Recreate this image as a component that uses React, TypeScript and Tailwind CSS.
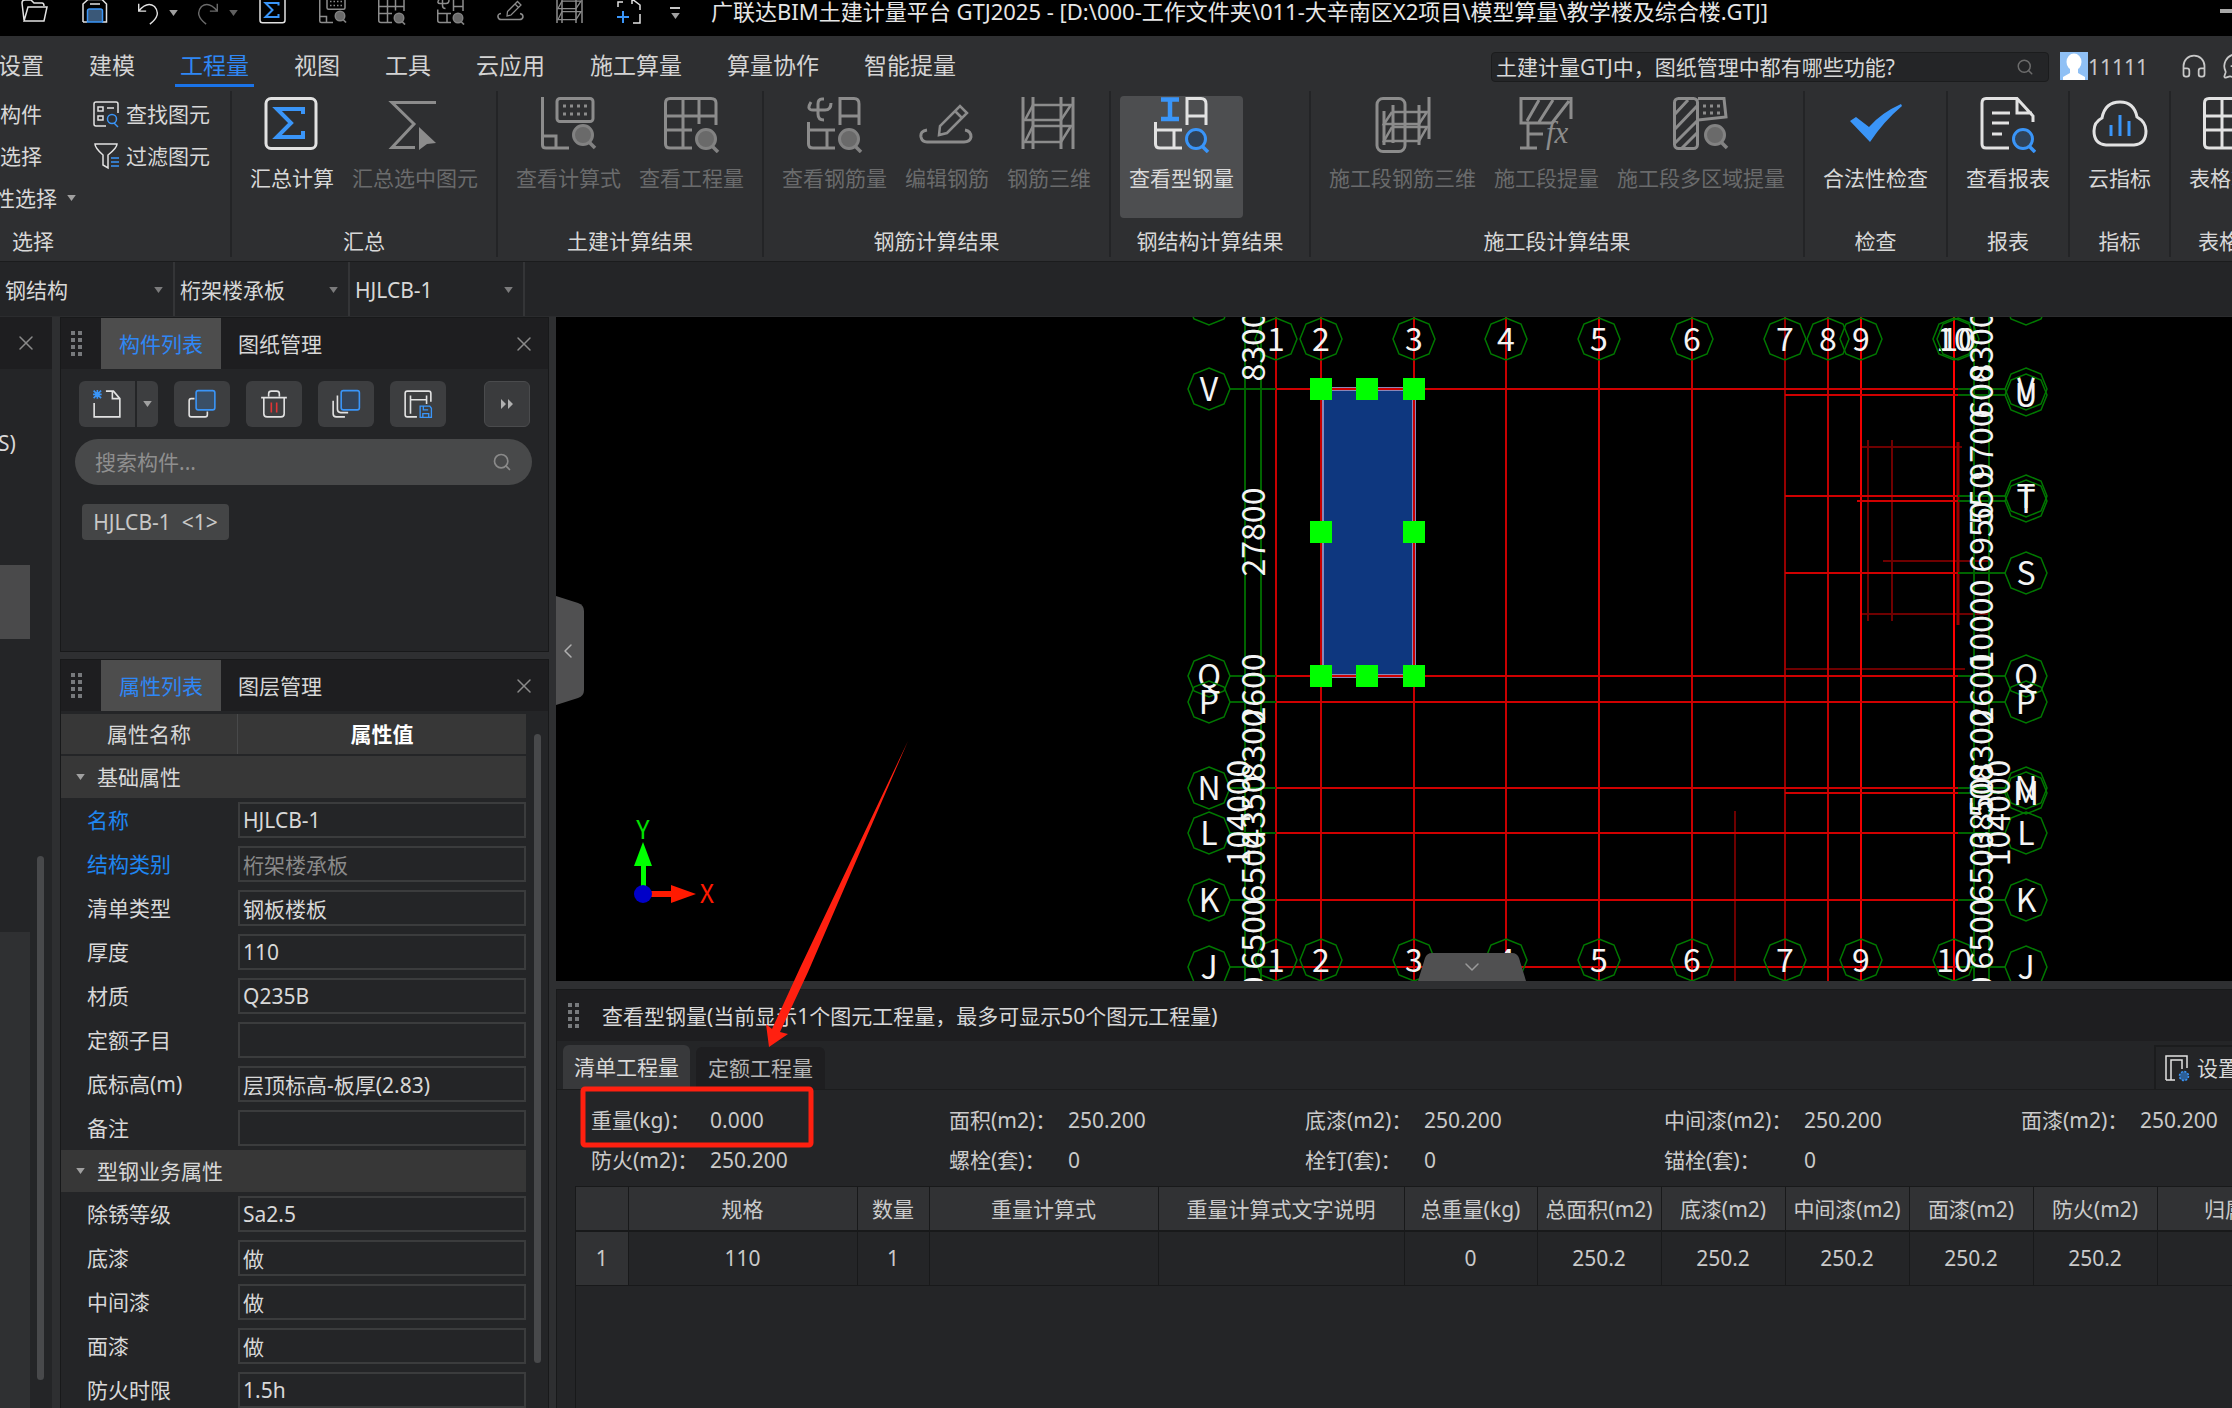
import type { ReactNode } from "react"
import clsx from "clsx"
import { ChevronDown, ChevronLeft, Headphones, MessageCircleMore, Search, X } from "lucide-react"

const LIGHT = "#e2e2e2"
const GREY = "#8c8c8c"
const BLUE = "#3a95f8"

/* ---------- icons ---------- */

interface IconProps {
  size?: number
  color?: string
}

function Svg({ size = 56, color = LIGHT, children }: IconProps & { children: ReactNode }) {
  return (
    <svg width={size} height={size} viewBox="0 0 56 56" fill="none" stroke={color} strokeWidth={3} className="shrink-0">
      {children}
    </svg>
  )
}

function Lens({ x, y, active = false }: { x: number; y: number; active?: boolean }) {
  return (
    <g stroke={active ? BLUE : "#828282"}>
      <circle cx={x} cy={y} r={9.5} fill={active ? "#2f4258" : "#6a6a6a"} />
      <path d={`M${x + 6} ${y + 7} l6 6`} strokeWidth={3.5} />
    </g>
  )
}

const SumIcon = (p: IconProps) => (
  <Svg {...p}>
    <rect x="2" y="1.5" width="50" height="50" rx="5" />
    <path d="M39 17 V12 H13 L27 26 L13 40 H39 V34" stroke={BLUE} strokeWidth={4} />
  </Svg>
)

const SumPickIcon = (p: IconProps) => (
  <Svg {...p}>
    <path d="M49 5.5 H5 L27 27 L5 50.5 H28" />
    <path d="M32 30 L49 46 L40 47 L32 53 Z" fill={GREY} stroke="none" />
  </Svg>
)

const FormulaIcon = (p: IconProps) => (
  <Svg {...p}>
    <path d="M1.5 0 V48 Q1.5 51 5 51 H28 M1.5 39 H15 V51" />
    <rect x="16" y="1.5" width="36" height="23" rx="3" />
    <path d="M22 9 H47 M22 17 H47" strokeDasharray="3 4" />
    <Lens x={42} y={38} />
  </Svg>
)

const GridIcon = (p: IconProps) => (
  <Svg {...p}>
    <path d="M52 28 V6 Q52 1.5 47 1.5 H6 Q1.5 1.5 1.5 6 V47 Q1.5 51 6 51 H28 M19 2 V51 M35 2 V27 M2 19 H52 M2 33 H28" />
    <Lens x={42} y={42} />
  </Svg>
)

const SectionBase = () => (
  <path d="M33 28 V1.5 H47 Q52 1.5 52 7 V28 M33 19 H52 M1.5 25 V47 Q1.5 51 6 51 H28 M1.5 33 H28 M20 33 V51" />
)

const RebarIcon = (p: IconProps) => (
  <Svg {...p}>
    <path d="M17 2 H15 Q11 2 11 7 V17 Q11 23 17 23 M4 5 Q-1 13 6 13 H18 Q24 13 24 6" />
    <SectionBase />
    <Lens x={42} y={42} />
  </Svg>
)

const SteelIcon = (p: IconProps) => (
  <Svg {...p}>
    <path d="M7 2.5 H25 M16 2 V22 M7 22 H25" stroke={BLUE} strokeWidth={4.5} />
    <SectionBase />
    <Lens x={42} y={42} active />
  </Svg>
)

const EditRebarIcon = (p: IconProps) => (
  <Svg {...p}>
    <path d="M8 33 Q1 34 2 40 Q3 45 8 45 H45 Q51 45 52 40 Q52 34 46 33" />
    <path d="M20 38 L21 29 L41 9 L48 16 L28 36 Z M36 14 L43 21" strokeWidth={2.5} />
  </Svg>
)

const Rebar3dIcon = (p: IconProps) => (
  <Svg {...p}>
    <path d="M2 0 V52 M12 0 V52 M40 0 V52 M52 0 V52" />
    <path d="M12 8 H50 L40 23 H4 L12 8 M12 29 H50 L40 45 H4 L12 29" strokeWidth={2.5} />
  </Svg>
)

const StageRebarIcon = (p: IconProps) => (
  <Svg {...p}>
    <rect x="2" y="1.5" width="28" height="53" rx="6" />
    <path d="M9 14 V48 M18 8 V46 M44 8 V48 M54 0 V42" />
    <path d="M17 15 H52 L44 27 H9 L17 15 M17 30 H52 L44 44 H9 L17 30" strokeWidth={2.5} />
  </Svg>
)

const StageFxIcon = (p: IconProps) => (
  <Svg {...p}>
    <path d="M52 22 V1.5 H2 V26 H33 L50 4 M9 26 V51 M1 51 H18 M9 37 H24 M8 24 L20 3 M20 25 L34 3" />
    <text x="27" y="46" fontSize="31" fontStyle="italic" fontFamily="Liberation Serif" fill={GREY} stroke="none">
      fx
    </text>
  </Svg>
)

const StageAreaIcon = (p: IconProps) => (
  <Svg {...p}>
    <rect x="1.5" y="1.5" width="23" height="50" rx="4" />
    <path d="M2 17 L15 3 M2 32 L24 9 M2 46 L24 24 M9 51 L24 36" />
    <path d="M25 1.5 H51 L53 20 L25 23" />
    <path d="M30 9 H48 M30 16 H48" strokeDasharray="3 4" />
    <Lens x={42} y={38} />
  </Svg>
)

const CheckIcon = (p: IconProps) => (
  <Svg {...p}>
    <path d="M2 24 L8 20 L21 30 Q33 16 53 7 L54 9 Q36 24 22 45 Z" fill={BLUE} stroke="none" />
  </Svg>
)

const ReportIcon = (p: IconProps) => (
  <Svg {...p}>
    <path d="M29 51 H6 Q2 51 2 47 V6 Q2 1.5 6 1.5 H37 L53 19 V25 M37 2 V16 H52 M12 16 H30 M12 26 H29 M12 37 H22" />
    <Lens x={43} y={42} active />
  </Svg>
)

const CloudIcon = (p: IconProps) => (
  <Svg {...p}>
    <path d="M14 48 Q2 47 2 34 Q2 25 10 21 Q13 5 28 5 Q42 5 45 20 Q54 25 54 34 Q54 47 42 48 Z" />
    <path d="M19 28 V39 M28 18 V39 M37 24 V39" stroke={BLUE} />
  </Svg>
)

const SheetIcon = (p: IconProps) => (
  <Svg {...p}>
    <path d="M54 1.5 H6 Q1.5 1.5 1.5 6 V47 Q1.5 51 6 51 H54 M19 2 V51 M37 2 V51 M2 19 H54 M2 33 H54" />
  </Svg>
)

const FolderIcon = () => (
  <Svg size={28}>
    <path d="M8 46 L4 12 Q4 6 10 6 H22 L28 12 H44 Q48 12 48 18 M8 48 L16 20 H54 L48 48 Z" />
  </Svg>
)

const SaveIcon = () => (
  <Svg size={28}>
    <path d="M4 50 V14 L14 5 H42 L51 14 V50 H42 M4 50 H12 M18 14 H38" />
    <path d="M13 50 V28 Q13 24 17 24 H39 Q43 24 43 28 V50 Z" stroke={BLUE} fill="#3a5878" />
  </Svg>
)

const UndoIcon = ({ color = LIGHT }: IconProps) => (
  <Svg size={26} color={color}>
    <path d="M8 8 V24 H24 M8 24 Q26 2 42 14 Q58 32 32 52" />
  </Svg>
)

const RedoIcon = () => (
  <Svg size={26} color="#6a6a6a">
    <path d="M48 8 V24 H32 M48 24 Q30 2 14 14 Q-2 32 24 52" />
  </Svg>
)

const AddFrameIcon = () => (
  <Svg size={28}>
    <path d="M6 20 V10 H16 M26 4 H34 L50 16 V26 M50 34 V52 H36 M34 4 V14" />
    <path d="M4 40 H28 M16 28 V52" stroke={BLUE} strokeWidth={4} />
  </Svg>
)

const FindIcon = () => (
  <Svg size={28}>
    <path d="M52 26 V8 Q52 4 48 4 H8 Q4 4 4 8 V48 Q4 52 8 52 H28" />
    <path d="M12 14 H22 V22 H12 Z M30 16 H44 M12 32 H22 V40 H12 Z" />
    <g stroke={BLUE}>
      <circle cx="40" cy="38" r="9" />
      <path d="M44 46 L52 54" />
    </g>
  </Svg>
)

const FilterIcon = () => (
  <Svg size={28}>
    <path d="M6 4 H50 Q50 12 32 26 V52 L22 46 V26 Q6 12 6 4 Z" />
    <path d="M38 32 H54 M38 40 H54 M38 48 H54" stroke={BLUE} />
  </Svg>
)

const NewIcon = () => (
  <Svg size={30}>
    <path d="M4 26 V52 H52 V18 L40 4 H26 M38 4 V18 H52" />
    <path d="M3 3 L17 17 M17 3 L3 17 M10 2 V18 M2 10 H18" stroke={BLUE} />
  </Svg>
)

const CopyIcon = () => (
  <Svg size={30}>
    <path d="M14 18 H8 Q4 18 4 22 V48 Q4 52 8 52 H34 Q38 52 38 48 V42" />
    <rect x="17" y="3" width="35" height="36" rx="4" stroke={BLUE} fill="#3a4f66" />
  </Svg>
)

const TrashIcon = () => (
  <Svg size={30}>
    <path d="M4 16 H52 M18 14 V9 Q18 4 23 4 H33 Q38 4 38 9 V14 M9 16 V46 Q9 52 15 52 H41 Q47 52 47 46 V16" />
    <path d="M23 25 V44 M33 25 V44" stroke="#e03535" />
  </Svg>
)

const LayersIcon = () => (
  <Svg size={30}>
    <path d="M12 12 V38 Q12 44 18 44 H32 M4 22 V46 Q4 52 10 52 H26" />
    <rect x="19" y="3" width="34" height="36" rx="4" stroke={BLUE} fill="#344459" />
  </Svg>
)

const StoreIcon = () => (
  <Svg size={30}>
    <path d="M52 24 V8 Q52 4 48 4 H8 Q4 4 4 8 V48 Q4 52 8 52 H26 M14 12 V46 M14 20 H44 M44 12 V28" />
    <path d="M32 32 H50 L53 36 V53 H32 Z M38 33 V39 H47 M37 53 V46 H48 V53" stroke={BLUE} strokeWidth={2.5} />
  </Svg>
)

const SettingIcon = () => (
  <Svg size={28}>
    <path d="M4 52 V4 H46 V28 M14 52 V12 H36 V30 M4 52 H22" />
    <circle cx="40" cy="44" r="9" fill="#2c5f97" stroke={BLUE} strokeDasharray="4 3" />
  </Svg>
)

function Caret({ className }: { className?: string }) {
  return (
    <svg width="9" height="6" viewBox="0 0 10 7" className={clsx("shrink-0", className)}>
      <path d="M0 0 H10 L5 7 Z" fill="#a0a0a0" />
    </svg>
  )
}

function Grip() {
  return (
    <svg width="12" height="26" viewBox="0 0 12 26" className="shrink-0">
      {[0, 7, 14, 21].map((y) => (
        <g key={y} fill="#77797c">
          <rect x="0" y={y} width="4" height="4" />
          <rect x="7" y={y} width="4" height="4" />
        </g>
      ))}
    </svg>
  )
}

/* ---------- top bars ---------- */

function TitleBar() {
  return (
    <header className="flex h-9 shrink-0 items-center overflow-hidden bg-black pb-3.5 pl-5">
      <div className="flex w-[691px] shrink-0 items-center">
        <button className="w-[61px]" aria-label="打开"><FolderIcon /></button>
        <button className="w-[54px]" aria-label="保存"><SaveIcon /></button>
        <button className="flex w-[60px] items-center gap-2 pt-1" aria-label="撤销"><UndoIcon /><Caret /></button>
        <button className="flex w-[64px] items-center gap-2 pt-1" aria-label="恢复"><RedoIcon /><Caret className="opacity-60" /></button>
        <button className="w-[60px]" aria-label="汇总计算"><SumIcon size={28} /></button>
        <button className="w-[59px]" aria-label="查看计算式"><FormulaIcon size={28} color={GREY} /></button>
        <button className="w-[59px]" aria-label="查看工程量"><GridIcon size={28} color={GREY} /></button>
        <button className="w-[60px]" aria-label="查看钢筋量"><RebarIcon size={28} color={GREY} /></button>
        <button className="w-[59px]" aria-label="编辑钢筋"><EditRebarIcon size={28} color={GREY} /></button>
        <button className="w-[59px]" aria-label="钢筋三维"><Rebar3dIcon size={28} color={GREY} /></button>
        <button className="w-[55px]" aria-label="添加"><AddFrameIcon /></button>
        <button className="flex flex-col items-center gap-1 pt-1" aria-label="更多">
          <span className="h-0.5 w-2.5 bg-[#c8c8c8]" />
          <Caret />
        </button>
      </div>
      <h1 className="flex-1 text-[22px] whitespace-nowrap text-[#e6e6e6]">
        广联达BIM土建计量平台 GTJ2025 - [D:\000-工作文件夹\011-大辛南区X2项目\模型算量\教学楼及综合楼.GTJ]
      </h1>
      <button className="h-1 w-3 bg-[#a8a8a8]" aria-label="最小化" />
    </header>
  )
}

const menus = ["设置", "建模", "工程量", "视图", "工具", "云应用", "施工算量", "算量协作", "智能提量"]

function MenuBar() {
  return (
    <nav className="flex h-[51px] shrink-0 items-center overflow-hidden bg-[#2e2f31]">
      <div className="-ml-[7px] flex h-full shrink-0 gap-[35px]">
        {menus.map((m) => (
          <button
            key={m}
            className={clsx(
              "border-b-3 px-[5px] pt-2.5 text-[23px] whitespace-nowrap",
              m === "工程量" ? "border-[#1a73e8] text-[#2f87f5]" : "border-transparent text-[#d4d4d4]"
            )}
          >
            {m}
          </button>
        ))}
      </div>
      <div className="flex-1" />
      <label className="mt-2.5 flex h-[30px] w-[558px] shrink-0 items-center rounded border border-[#1b1c1d] bg-[#242527] px-1">
        <input
          className="min-w-0 flex-1 bg-transparent text-[#d8d8d8] outline-none"
          aria-label="搜索帮助"
          defaultValue="土建计量GTJ中，图纸管理中都有哪些功能?"
        />
        <Search className="mr-2.5 size-[18px] text-[#6c6c6c]" />
      </label>
      <svg width="28" height="28" viewBox="0 0 28 28" className="mt-2 ml-[11px] shrink-0">
        <rect width="28" height="28" fill="#8fc0f5" />
        <ellipse cx="14" cy="10" rx="7.5" ry="8.5" fill="#fff" />
        <path d="M10 15 H18 V21 L25 25 V28 H3 V25 L10 21 Z" fill="#fff" />
      </svg>
      <span className="mt-2.5 w-[92px] shrink-0 text-[#c8c8c8]">11111</span>
      <Headphones className="mt-2 size-7 shrink-0 text-[#c8c8c8]" strokeWidth={1.5} />
      <MessageCircleMore className="mt-2 -mr-[18px] ml-3.5 size-7 shrink-0 text-[#c8c8c8]" strokeWidth={1.5} />
    </nav>
  )
}

interface Tool {
  label: string
  icon: (p: IconProps) => ReactNode
  on?: boolean
  active?: boolean
}

const groups: { title: string; tools: Tool[]; wide?: boolean; left?: boolean }[] = [
  { title: "汇总", tools: [{ label: "汇总计算", icon: SumIcon, on: true }, { label: "汇总选中图元", icon: SumPickIcon }] },
  { title: "土建计算结果", tools: [{ label: "查看计算式", icon: FormulaIcon }, { label: "查看工程量", icon: GridIcon }] },
  {
    title: "钢筋计算结果",
    tools: [
      { label: "查看钢筋量", icon: RebarIcon },
      { label: "编辑钢筋", icon: EditRebarIcon },
      { label: "钢筋三维", icon: Rebar3dIcon },
    ],
  },
  { title: "钢结构计算结果", wide: true, tools: [{ label: "查看型钢量", icon: SteelIcon, on: true, active: true }] },
  {
    title: "施工段计算结果",
    tools: [
      { label: "施工段钢筋三维", icon: StageRebarIcon },
      { label: "施工段提量", icon: StageFxIcon },
      { label: "施工段多区域提量", icon: StageAreaIcon },
    ],
  },
  { title: "检查", tools: [{ label: "合法性检查", icon: CheckIcon, on: true }] },
  { title: "报表", tools: [{ label: "查看报表", icon: ReportIcon, on: true }] },
  { title: "指标", tools: [{ label: "云指标", icon: CloudIcon, on: true }] },
  { title: "表格", left: true, tools: [{ label: "表格算量", icon: SheetIcon, on: true }] },
]

function Ribbon() {
  return (
    <div className="flex h-[175px] shrink-0 overflow-hidden border-b border-[#1b1c1d] bg-[#2e2f31] py-1">
      <section className="flex w-[232px] shrink-0 flex-col border-r-2 border-[#232426]">
        <div className="flex flex-1 gap-9">
          <div className="flex w-14 shrink-0 flex-col pt-0.5">
            <button className="h-[42px] text-left">构件</button>
            <button className="h-[42px] text-left">选择</button>
            <button className="-ml-1.5 flex h-[42px] w-20 items-center gap-2.5 whitespace-nowrap">性选择<Caret /></button>
          </div>
          <div className="flex flex-col pt-0.5">
            <button className="flex h-[42px] items-center gap-1.5"><FindIcon />查找图元</button>
            <button className="flex h-[42px] items-center gap-1.5"><FilterIcon />过滤图元</button>
          </div>
        </div>
        <h2 className="h-[30px] pl-3">选择</h2>
      </section>
      {groups.map((g) => (
        <section
          key={g.title}
          className={clsx("flex shrink-0 flex-col border-r-2 border-[#232426] px-[9px] whitespace-nowrap", g.wide && "w-[200px]")}
        >
          <div className="flex flex-1 pt-[5px]">
            {g.tools.map(({ label, icon: Icon, on, active }) => (
              <button
                key={label}
                disabled={!on}
                className={clsx(
                  "flex h-[122px] flex-col items-center gap-[11px] rounded px-[9px] pt-px",
                  on ? "text-[#d8d8d8]" : "text-[#6a6b6c]",
                  active && "bg-[#4d4e50]"
                )}
              >
                <Icon color={on ? LIGHT : GREY} />
                {label}
              </button>
            ))}
          </div>
          <h2 className={clsx("h-[30px]", g.left ? "pl-[18px]" : "text-center")}>{g.title}</h2>
        </section>
      ))}
    </div>
  )
}

function SelectBar() {
  return (
    <div className="flex h-[55px] shrink-0 border-b border-[#2b2c2e] bg-[#242527]">
      {["钢结构", "桁架楼承板", "HJLCB-1"].map((v) => (
        <div key={v} className="flex w-[175px] items-center border-r-2 border-[#343537] pt-0.5 pr-2.5">
          <select aria-label={v} className="h-full flex-1 appearance-none bg-transparent pl-[5px] text-[#d8d8d8] outline-none">
            <option>{v}</option>
          </select>
          <Caret className="opacity-70" />
        </div>
      ))}
    </div>
  )
}

/* ---------- side panels ---------- */

function PanelTabs({ active, other }: { active: string; other: string }) {
  return (
    <div className="flex h-[51px] shrink-0 items-center bg-[#1e1e20] pr-3 pl-2.5">
      <Grip />
      <button className="ml-[18px] h-full w-[120px] bg-[#4d4d4d] text-[#2f87f5]">{active}</button>
      <button className="ml-[17px] text-[#d8d8d8]">{other}</button>
      <button className="ml-auto text-[#8a8a8a]" aria-label="关闭"><X className="size-6" strokeWidth={1.5} /></button>
    </div>
  )
}

function ComponentPanel() {
  const btn = "flex h-[46px] w-14 items-center justify-center rounded-md bg-[#3d3e40]"
  return (
    <section className="flex h-[335px] shrink-0 flex-col border border-[#18191a] bg-[#242527]">
      <PanelTabs active="构件列表" other="图纸管理" />
      <div className="mt-3 flex gap-4 px-[18px]">
        <div className="flex gap-0.5">
          <button className="flex h-[46px] w-14 items-center justify-center rounded-l-md bg-[#3d3e40]" aria-label="新建"><NewIcon /></button>
          <button className="flex h-[46px] w-[21px] items-center justify-center rounded-r-md bg-[#3d3e40]" aria-label="新建选项"><Caret /></button>
        </div>
        <button className={btn} aria-label="复制"><CopyIcon /></button>
        <button className={btn} aria-label="删除"><TrashIcon /></button>
        <button className={btn} aria-label="层间复制"><LayersIcon /></button>
        <button className={btn} aria-label="存档"><StoreIcon /></button>
        <button className="ml-auto flex h-[46px] w-[46px] items-center justify-center rounded-md border border-[#4a4b4d] bg-[#3a3b3d]" aria-label="更多">
          <svg width="12" height="10" viewBox="0 0 12 10" fill="#b0b0b0"><path d="M0 0 L5 5 L0 10 Z M7 0 L12 5 L7 10 Z" /></svg>
        </button>
      </div>
      <label className="mt-3 mr-4 ml-3.5 flex h-[46px] items-center rounded-full bg-[#48494a] px-5">
        <input className="min-w-0 flex-1 bg-transparent outline-none placeholder:text-[#8f8f8f]" placeholder="搜索构件..." aria-label="搜索构件" />
        <Search className="size-5 text-[#8a8a8a]" />
      </label>
      <button className="mt-[19px] ml-[21px] h-9 w-[147px] rounded bg-[#444546] text-center whitespace-pre text-[#c8c8c8]">{"HJLCB-1  <1>"}</button>
    </section>
  )
}

interface Prop {
  name: string
  value: string
  kind?: "key" | "locked"
}

const baseProps: Prop[] = [
  { name: "名称", value: "HJLCB-1", kind: "key" },
  { name: "结构类别", value: "桁架楼承板", kind: "locked" },
  { name: "清单类型", value: "钢板楼板" },
  { name: "厚度", value: "110" },
  { name: "材质", value: "Q235B" },
  { name: "定额子目", value: "" },
  { name: "底标高(m)", value: "层顶标高-板厚(2.83)" },
  { name: "备注", value: "" },
]

const steelProps: Prop[] = [
  { name: "除锈等级", value: "Sa2.5" },
  { name: "底漆", value: "做" },
  { name: "中间漆", value: "做" },
  { name: "面漆", value: "做" },
  { name: "防火时限", value: "1.5h" },
]

function PropGroup({ title, rows }: { title: string; rows: Prop[] }) {
  return (
    <div>
      <button className="flex h-[42px] w-full items-center gap-3 bg-[#373737] pl-[15px]"><Caret />{title}</button>
      {rows.map((r) => (
        <label key={r.name} className="flex h-11 items-center">
          <span className={clsx("w-[177px] shrink-0 pl-[26px]", r.kind && "text-[#1f86f0]")}>{r.name}</span>
          <input
            defaultValue={r.value}
            className={clsx(
              "h-9 min-w-0 flex-1 border-2 border-[#3b3c3d] bg-transparent px-[3px] outline-none",
              r.kind === "locked" ? "text-[#8a8a8a]" : "text-[#d8d8d8]"
            )}
          />
        </label>
      ))}
    </div>
  )
}

function PropertyPanel() {
  return (
    <section className="flex min-h-0 flex-1 flex-col border border-b-0 border-[#18191a] bg-[#242527]">
      <PanelTabs active="属性列表" other="图层管理" />
      <div className="mt-[3px] flex min-h-0 flex-1">
        <div className="w-[465px] shrink-0 overflow-hidden">
          <div className="mb-0.5 flex h-10 items-center bg-[#373737] text-center">
            <span className="w-[177px] border-r border-[#48494a] leading-10">属性名称</span>
            <span className="flex-1 font-bold text-white">属性值</span>
          </div>
          <PropGroup title="基础属性" rows={baseProps} />
          <PropGroup title="型钢业务属性" rows={steelProps} />
        </div>
        <div className="mt-5 ml-2 h-[629px] w-[7px] rounded-full bg-[#48494b]" />
      </div>
    </section>
  )
}

function NavStrip() {
  return (
    <aside className="flex w-[52px] shrink-0 flex-col bg-[#242527]">
      <div className="flex h-[52px] shrink-0 items-center justify-end bg-[#1e1e20] pr-3.5 text-[#8a8a8a]">
        <button aria-label="关闭"><X className="size-6" strokeWidth={1.5} /></button>
      </div>
      <div className="flex flex-1">
        <div className="flex w-[30px] flex-col">
          <div className="-ml-0.5 h-[196px] pt-[60px]">S)</div>
          <div className="h-[74px] bg-[#4a4a4b]" />
          <div className="mt-[293px] flex-1 bg-[#2f3032]" />
        </div>
        <div className="mt-[487px] ml-[7px] h-[524px] w-[7px] rounded-full bg-[#48494b]" />
      </div>
    </aside>
  )
}

/* ---------- drawing canvas ---------- */

const TOP = 317
const BOTTOM = 983

const columns = [
  { x: 1276, name: "1", color: "#c80000" },
  { x: 1321, name: "2", color: "#c80000" },
  { x: 1414, name: "3", color: "#c80000" },
  { x: 1506, name: "4", color: "#c80000" },
  { x: 1599, name: "5", color: "#d80000" },
  { x: 1692, name: "6", color: "#c80000" },
  { x: 1785, name: "7", color: "#960000" },
  { x: 1828, name: "8", color: "#c00000" },
  { x: 1861, name: "9", color: "#f00000" },
  { x: 1954, name: "10", color: "#ff0000" },
]

const rows = [
  { y: 389, name: "V", from: 1276 },
  { y: 395, name: "U", from: 1785 },
  { y: 496, name: "T", from: 1785 },
  { y: 501, name: "T", from: 1857 },
  { y: 573, name: "S", from: 1785 },
  { y: 676, name: "Q", from: 1276 },
  { y: 702, name: "P", from: 1276 },
  { y: 788, name: "N", from: 1276 },
  { y: 793, name: "M", from: 1785 },
  { y: 833, name: "L", from: 1276 },
  { y: 900, name: "K", from: 1276 },
  { y: 967, name: "J", from: 1276 },
]

const leftDims: [string, number][] = [
  ["8300", 346], ["27800", 532], ["2600", 689], ["8300", 745], ["4350", 811], ["6500", 867], ["6500", 934], ["6500", 1012],
]

const rightDims: [string, number][] = [
  ["8300", 346], ["600", 392], ["9700", 445], ["550", 498], ["6950", 537], ["10000", 624], ["2600", 689],
  ["8300", 745], ["500", 791], ["3850", 813], ["6500", 867], ["6500", 934], ["6500", 1012],
]

const handles = [
  [1321, 389], [1367, 389], [1414, 389],
  [1321, 532], [1414, 532],
  [1321, 676], [1367, 676], [1414, 676],
]

function Bubble({ x, y, name = "" }: { x: number; y: number; name?: string }) {
  return (
    <g>
      <path
        d={`M${x} ${y - 21} l15 6 l6 15 l-6 15 l-15 6 l-15 -6 l-6 -15 l6 -15 Z`}
        fill="none"
        stroke="#007800"
        strokeWidth={1.5}
      />
      <text x={x} y={y + 12} textAnchor="middle">{name}</text>
    </g>
  )
}

function Dim({ x, y, value }: { x: number; y: number; value: string }) {
  return <text x={x} y={y} textAnchor="middle" transform={`rotate(-90 ${x} ${y})`} dy={12}>{value}</text>
}

function Drawing() {
  return (
    <svg
      className="absolute inset-0 h-full w-full"
      viewBox="556 317 1676 664"
      preserveAspectRatio="xMidYMin slice"
      fill="#f4f4f4"
      fontSize="32"
      fontFamily="Noto Sans CJK SC, sans-serif"
    >
      {/* selected slab */}
      <rect x="1322" y="389" width="92" height="287" fill="#0e377f" stroke="#8a86b8" strokeWidth="4" />

      {/* secondary axes */}
      <g stroke="#6e0000" strokeWidth="2">
        <path d="M1861 447 H1962 M1883 561 H1990 M1861 614 H1990 M1785 669 H1965" />
        <path d="M1868 440 V621 M1892 440 V621 M1735 811 V983" />
        <path d="M1958 442 V625" stroke="#960000" strokeWidth="3" />
      </g>

      {columns.map((c) => (
        <path key={c.name} d={`M${c.x} ${TOP} V${BOTTOM}`} stroke={c.color} strokeWidth="2" />
      ))}
      {rows.map((r) => (
        <g key={r.y} strokeWidth="2">
          <path d={`M${r.from} ${r.y} H1958`} stroke="#d00000" />
          <path d={`M1958 ${r.y} H2005`} stroke="#006400" />
          {r.from === 1276 && <path d={`M1230 ${r.y} H1276`} stroke="#006400" />}
        </g>
      ))}
      <path d="M1245 317 V983 M1261 317 V983 M1974 317 V983 M1989 317 V983" stroke="#006400" strokeWidth="2" />

      <Bubble x={1209} y={304} />
      <Bubble x={2026} y={304} />
      {columns.map((c) => <Bubble key={c.name} x={c.x} y={339} name={c.name} />)}
      <Bubble x={1958} y={339} name="10" />
      {columns.filter((c) => c.name !== "8").map((c) => <Bubble key={c.name} x={c.x} y={960} name={c.name} />)}
      {rows.filter((r) => r.from === 1276).map((r) => <Bubble key={r.y} x={1209} y={r.y} name={r.name} />)}
      {rows.map((r) => <Bubble key={r.y} x={2026} y={r.y} name={r.name} />)}

      {leftDims.map(([v, y]) => <Dim key={y} x={1253} y={y} value={v} />)}
      {rightDims.map(([v, y]) => <Dim key={y} x={1981} y={y} value={v} />)}
      <Dim x={1238} y={813} value="104000" />
      <Dim x={1998} y={813} value="104000" />

      {handles.map(([x, y]) => (
        <rect key={`${x}-${y}`} x={x - 11} y={y - 11} width="22" height="22" fill="#00ff00" />
      ))}

      {/* coordinate gizmo */}
      <path d="M641 894 V866 H634 L643 842 L652 866 H646 V894 Z" fill="#00ff00" />
      <path d="M644 891 H671 V885 L696 894 L671 903 V897 H644 Z" fill="#ff1a00" />
      <circle cx="643" cy="894" r="9" fill="#0000c8" />
      <text x="643" y="839" textAnchor="middle" fontSize="25" fill="#00e000">Y</text>
      <text x="707" y="903" textAnchor="middle" fontSize="25" fill="#ff1a00">X</text>
    </svg>
  )
}

function Canvas() {
  return (
    <div className="relative min-h-0 flex-1 overflow-hidden bg-black">
      <Drawing />
      <button className="absolute top-[279px] left-0 h-[109px] w-7" aria-label="收起左侧">
        <svg viewBox="0 0 28 109" className="absolute inset-0 h-full w-full">
          <path d="M0 0 L22 7 Q28 9 28 15 V94 Q28 100 22 102 L0 109 Z" fill="#505051" />
        </svg>
        <ChevronLeft className="relative size-6 text-[#b0b0b0]" strokeWidth={1.5} />
      </button>
      <button className="absolute bottom-0 left-[862px] h-7 w-[108px]" aria-label="收起下方">
        <svg viewBox="0 0 108 28" className="absolute inset-0 h-full w-full">
          <path d="M0 28 L7 5 Q9 0 14 0 H94 Q99 0 101 5 L108 28 Z" fill="#505051" />
        </svg>
        <ChevronDown className="relative mx-auto size-6 text-[#9a9a9a]" strokeWidth={1.5} />
      </button>
    </div>
  )
}

/* ---------- quantity panel ---------- */

const stats = [
  ["重量(kg)：", "0.000"], ["面积(m2)：", "250.200"], ["底漆(m2)：", "250.200"], ["中间漆(m2)：", "250.200"], ["面漆(m2)：", "250.200"],
  ["防火(m2)：", "250.200"], ["螺栓(套)：", "0"], ["栓钉(套)：", "0"], ["锚栓(套)：", "0"],
]

const tableCols: [string, string, string][] = [
  ["规格", "110", "w-[229px]"],
  ["数量", "1", "w-[72px]"],
  ["重量计算式", "", "w-[229px]"],
  ["重量计算式文字说明", "", "w-[246px]"],
  ["总重量(kg)", "0", "w-[133px]"],
  ["总面积(m2)", "250.2", "w-[124px]"],
  ["底漆(m2)", "250.2", "w-[124px]"],
  ["中间漆(m2)", "250.2", "w-[124px]"],
  ["面漆(m2)", "250.2", "w-[124px]"],
  ["防火(m2)", "250.2", "w-[124px]"],
  ["归属图元", "", "w-[178px]"],
]

function QuantityPanel() {
  return (
    <section className="flex h-[419px] shrink-0 flex-col overflow-hidden border-t border-l border-[#18191a] bg-[#242527]">
      <div className="flex h-[51px] shrink-0 items-center gap-[22px] bg-[#1e1e20] pl-[11px]">
        <Grip />
        <h2>查看型钢量(当前显示1个图元工程量，最多可显示50个图元工程量)</h2>
      </div>
      <div className="flex h-[49px] shrink-0 items-end gap-1.5 border-b border-[#1b1c1d] pl-1.5">
        <button className="h-11 w-[127px] rounded-t-md bg-[#38393b]">清单工程量</button>
        <button className="h-[42px] w-[129px] rounded-t-md bg-[#1e1e20] text-[#b4b4b4]">定额工程量</button>
        <button className="-mr-6 ml-auto flex h-11 w-[102px] items-center gap-[5px] border-t-2 border-l-2 border-[#1b1c1d] pl-2 whitespace-nowrap">
          <SettingIcon />设置
        </button>
      </div>
      <dl className="grid shrink-0 grid-cols-[358px_356px_359px_357px_1fr] pt-2.5 pl-[34px] text-[#cacaca]">
        {stats.map(([name, value], i) => (
          <div key={name} className="flex h-10 items-center whitespace-nowrap">
            <dt className={i % 5 === 3 ? "w-[140px] shrink-0" : "w-[119px] shrink-0"}>{name}</dt>
            <dd>{value}</dd>
          </div>
        ))}
      </dl>
      <div className="mt-1.5 ml-[18px] flex-1 border-t border-l border-[#18191a]">
        <table className="w-[1759px] table-fixed border-collapse text-center whitespace-nowrap text-[#cacaca]">
          <thead>
            <tr className="h-11 bg-[#313234]">
              <th className="w-[52px] border-r border-b-2 border-[#18191a]" />
              {tableCols.map(([name, , w]) => (
                <th key={name} className={clsx("border-r border-b-2 border-[#18191a] p-0 font-normal", w)}>{name}</th>
              ))}
            </tr>
          </thead>
          <tbody>
            <tr className="h-[54px]">
              <td className="border-r border-b border-[#18191a] bg-[#313234]">1</td>
              {tableCols.map(([name, value]) => (
                <td key={name} className="border-r border-b border-[#18191a]">{value}</td>
              ))}
            </tr>
          </tbody>
        </table>
      </div>
    </section>
  )
}

export default function App() {
  return (
    <div className="relative flex h-screen flex-col overflow-hidden bg-[#2e2f31] font-['Noto_Sans','Noto_Sans_CJK_SC',sans-serif] text-[21px] leading-7 text-[#d8d8d8]">
      <TitleBar />
      <MenuBar />
      <Ribbon />
      <SelectBar />
      <main className="flex min-h-0 flex-1">
        <NavStrip />
        <div className="ml-2 flex w-[489px] shrink-0 flex-col gap-[7px]">
          <ComponentPanel />
          <PropertyPanel />
        </div>
        <div className="ml-[7px] flex min-w-0 flex-1 flex-col gap-2">
          <Canvas />
          <QuantityPanel />
        </div>
      </main>

      {/* callout arrow and frame around the weight total */}
      <svg className="pointer-events-none absolute inset-0 h-full w-full">
        <path d="M908 741 L808 972 L780 1032 L788 1034 L769 1047 L766 1024 L772 1029 L800 968 Z" fill="#ff2010" />
        <rect x="583" y="1089" width="228" height="56" rx="2" fill="none" stroke="#ff2010" strokeWidth="5" />
      </svg>
    </div>
  )
}
